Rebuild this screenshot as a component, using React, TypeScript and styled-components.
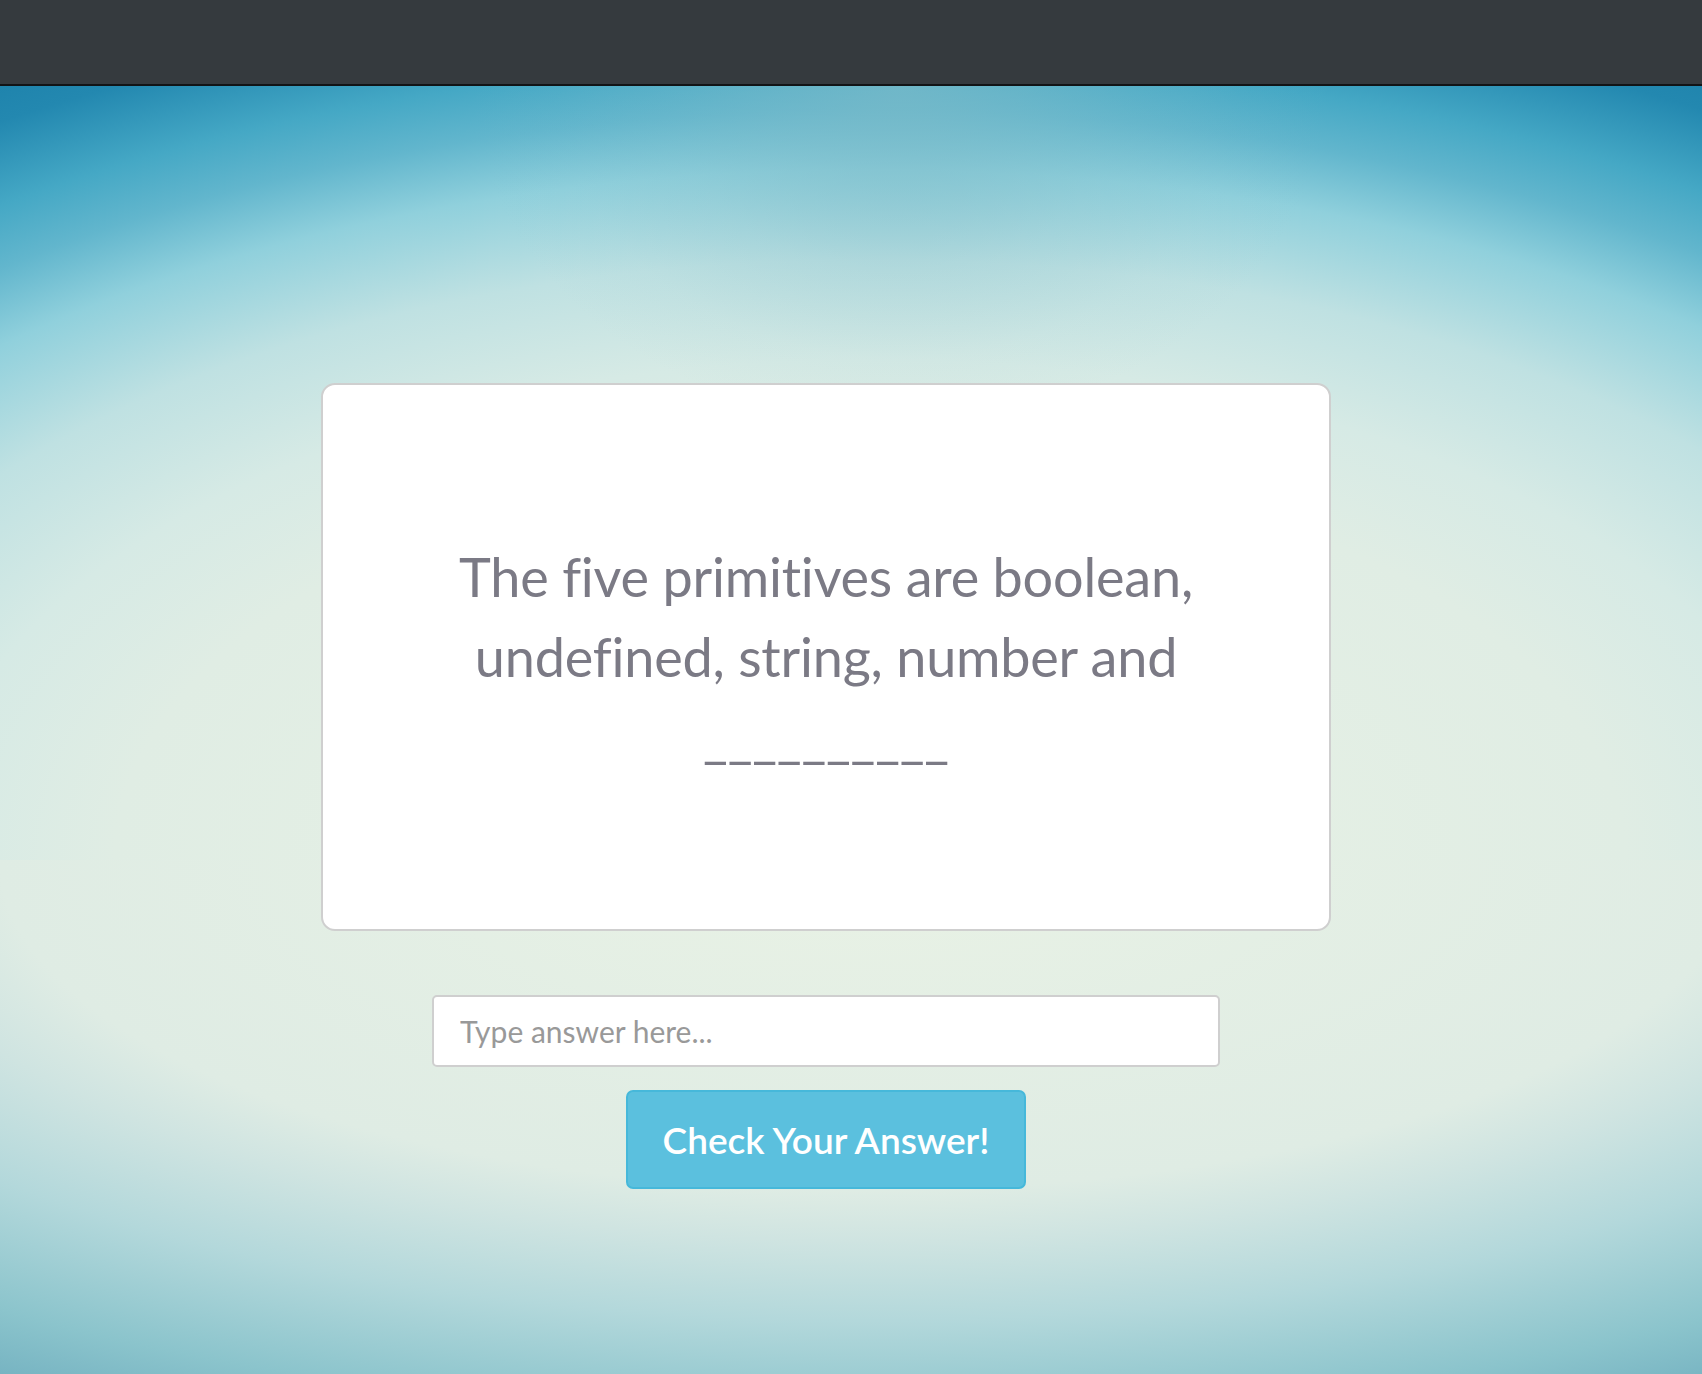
import React from "react";
import styled, { createGlobalStyle } from "styled-components";

const GlobalStyle = createGlobalStyle`
  html, body {
    margin: 0;
    padding: 0;
  }
  body {
    font-family: Lato, "Open Sans", sans-serif;
  }
  * { box-sizing: border-box; }
`;

const Page = styled.div`
  display: flex;
  flex-direction: column;
  min-height: 100vh;
`;

const TopBar = styled.header`
  height: 86px;
  background: #353a3e;
  border-bottom: 2px solid #121416;
  flex-shrink: 0;
`;

const Main = styled.main`
  flex: 1;
  display: flex;
  flex-direction: column;
  align-items: center;
  padding: 297px 50px 0 0;
  background-color: #dfece4;
  background-image:
    radial-gradient(
      430px 340px at 900px 0px,
      rgba(122, 186, 200, 0.72) 0%,
      rgba(122, 186, 200, 0.5) 25%,
      rgba(122, 186, 200, 0.22) 55%,
      rgba(122, 186, 200, 0.06) 80%,
      rgba(122, 186, 200, 0) 100%
    ),
    radial-gradient(
      1700px 900px at 870px 774px,
      #e9f2e5 0%,
      #e0ede4 44.4%,
      #d6eae5 55.6%,
      #bfe1e2 66.7%,
      #90d0dc 76.7%,
      #62b6cd 83.3%,
      #45a8c5 88.9%,
      #2388b0 96.7%,
      #1f84ad 100%
    ),
    radial-gradient(
      1582px 600px at 870px 0px,
      #e9f2e5 0%,
      #dfece4 55%,
      #cfe4e1 63.5%,
      #b3d8db 76.7%,
      #8bc4cc 93%,
      #77b4c2 101.8%
    );
  background-size: 100% 100%, 100% 774px, 100% 514px;
  background-position: top, top, bottom;
  background-repeat: no-repeat;
`;

const Card = styled.section`
  width: 1010px;
  height: 548px;
  background: #ffffff;
  border: 2px solid #cfcfcf;
  border-radius: 14px;
  display: flex;
  align-items: center;
  justify-content: center;
`;

const Question = styled.p`
  margin: 0;
  text-align: center;
  color: #7b7a85;
  font-family: Lato, sans-serif;
  font-size: 54px;
  line-height: 80px;
  letter-spacing: -0.2px;
  font-variant-ligatures: none;
`;

const AnswerInput = styled.input`
  margin-top: 64px;
  width: 788px;
  height: 72px;
  border: 2px solid #cfcfcf;
  border-radius: 5px;
  background: #ffffff;
  padding: 0 26px;
  font-family: Lato, sans-serif;
  font-size: 30px;
  color: #555;
  outline: none;
  &::placeholder {
    color: #999999;
  }
`;

const CheckButton = styled.button`
  margin-top: 23px;
  width: 400px;
  height: 99px;
  background: #5bc0de;
  border: 2px solid #46b8da;
  border-radius: 7px;
  color: #ffffff;
  font-family: Lato, sans-serif;
  font-size: 37px;
  font-weight: 600;
  cursor: pointer;
`;

export default function App() {
  return (
    <Page>
      <GlobalStyle />
      <TopBar />
      <Main>
        <Card>
          <Question>
            The five primitives are boolean,
            <br />
            undefined, string, number and
            <br />
            __________
          </Question>
        </Card>
        <AnswerInput type="text" placeholder="Type answer here..." />
        <CheckButton type="button">Check Your Answer!</CheckButton>
      </Main>
    </Page>
  );
}
